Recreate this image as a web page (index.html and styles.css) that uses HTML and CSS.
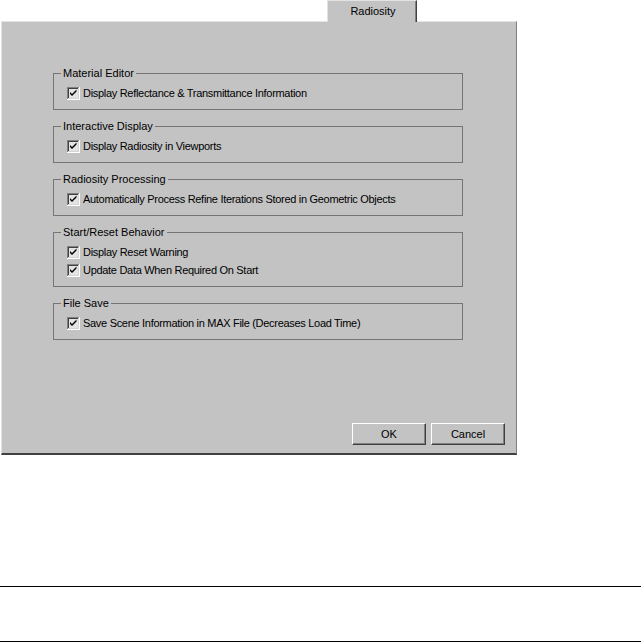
FILE: index.html
```html
<!DOCTYPE html>
<html lang="en">

<head>
    <meta charset="UTF-8">
    <title>Radiosity</title>
    <link rel="stylesheet" href="styles.css">
</head>

<body>

    <section class="dialog">

        <div class="tabs">
            <div class="tab">Radiosity</div>
        </div>

        <div class="panel">

            <div class="groups">

                <fieldset class="group">
                    <legend>Material Editor</legend>
                    <label class="row"><span class="check"><svg width="13" height="13" viewBox="0 0 13 13"><path d="M0 0H12V1H1V12H0Z" fill="#808080"/><path d="M1 1H11V2H2V11H1Z" fill="#404040"/><path d="M12 0H13V13H0V12H12Z" fill="#ffffff"/><path d="M11 1H12V12H1V11H11Z" fill="#d4d4d4"/><rect x="2" y="2" width="9" height="9" fill="#e4e4e4"/><path d="M3 5L5 7L9.5 2.5V4.5L5 9L3 7Z" fill="#000"/></svg></span>Display Reflectance &amp; Transmittance Information</label>
                </fieldset>

                <fieldset class="group">
                    <legend>Interactive Display</legend>
                    <label class="row"><span class="check"><svg width="13" height="13" viewBox="0 0 13 13"><path d="M0 0H12V1H1V12H0Z" fill="#808080"/><path d="M1 1H11V2H2V11H1Z" fill="#404040"/><path d="M12 0H13V13H0V12H12Z" fill="#ffffff"/><path d="M11 1H12V12H1V11H11Z" fill="#d4d4d4"/><rect x="2" y="2" width="9" height="9" fill="#e4e4e4"/><path d="M3 5L5 7L9.5 2.5V4.5L5 9L3 7Z" fill="#000"/></svg></span>Display Radiosity in Viewports</label>
                </fieldset>

                <fieldset class="group">
                    <legend>Radiosity Processing</legend>
                    <label class="row"><span class="check"><svg width="13" height="13" viewBox="0 0 13 13"><path d="M0 0H12V1H1V12H0Z" fill="#808080"/><path d="M1 1H11V2H2V11H1Z" fill="#404040"/><path d="M12 0H13V13H0V12H12Z" fill="#ffffff"/><path d="M11 1H12V12H1V11H11Z" fill="#d4d4d4"/><rect x="2" y="2" width="9" height="9" fill="#e4e4e4"/><path d="M3 5L5 7L9.5 2.5V4.5L5 9L3 7Z" fill="#000"/></svg></span>Automatically Process Refine Iterations Stored in Geometric Objects</label>
                </fieldset>

                <fieldset class="group">
                    <legend>Start/Reset Behavior</legend>
                    <label class="row"><span class="check"><svg width="13" height="13" viewBox="0 0 13 13"><path d="M0 0H12V1H1V12H0Z" fill="#808080"/><path d="M1 1H11V2H2V11H1Z" fill="#404040"/><path d="M12 0H13V13H0V12H12Z" fill="#ffffff"/><path d="M11 1H12V12H1V11H11Z" fill="#d4d4d4"/><rect x="2" y="2" width="9" height="9" fill="#e4e4e4"/><path d="M3 5L5 7L9.5 2.5V4.5L5 9L3 7Z" fill="#000"/></svg></span>Display Reset Warning</label>
                    <label class="row"><span class="check"><svg width="13" height="13" viewBox="0 0 13 13"><path d="M0 0H12V1H1V12H0Z" fill="#808080"/><path d="M1 1H11V2H2V11H1Z" fill="#404040"/><path d="M12 0H13V13H0V12H12Z" fill="#ffffff"/><path d="M11 1H12V12H1V11H11Z" fill="#d4d4d4"/><rect x="2" y="2" width="9" height="9" fill="#e4e4e4"/><path d="M3 5L5 7L9.5 2.5V4.5L5 9L3 7Z" fill="#000"/></svg></span>Update Data When Required On Start</label>
                </fieldset>

                <fieldset class="group">
                    <legend>File Save</legend>
                    <label class="row"><span class="check"><svg width="13" height="13" viewBox="0 0 13 13"><path d="M0 0H12V1H1V12H0Z" fill="#808080"/><path d="M1 1H11V2H2V11H1Z" fill="#404040"/><path d="M12 0H13V13H0V12H12Z" fill="#ffffff"/><path d="M11 1H12V12H1V11H11Z" fill="#d4d4d4"/><rect x="2" y="2" width="9" height="9" fill="#e4e4e4"/><path d="M3 5L5 7L9.5 2.5V4.5L5 9L3 7Z" fill="#000"/></svg></span>Save Scene Information in MAX File (Decreases Load Time)</label>
                </fieldset>

            </div>

            <div class="buttons">
                <button class="btn">OK</button>
                <button class="btn">Cancel</button>
            </div>

        </div>

    </section>

    <div class="strip"></div>

</body>

</html>
```

FILE: styles.css
```css
body {
    margin: 0;
    background: #ffffff;
    font-family: "Liberation Sans", Arial, sans-serif;
    font-size: 11px;
    color: #000000;
}

.dialog {
    width: 518px;
}

.tabs {
    display: flex;
    padding-left: 327px;
    height: 21px;
}

.tab {
    position: relative;
    z-index: 1;
    width: 90px;
    height: 22px;
    margin-bottom: -1px;
    background: #c3c3c3;
    border-top: 1px solid #e3e3e3;
    border-left: 1px solid #e3e3e3;
    border-right: 1px solid #404040;
    box-shadow: inset -1px 0 0 #808080;
    box-sizing: border-box;
    text-align: center;
    line-height: 20px;
    padding-left: 2px;
}

.panel {
    margin-left: 1px;
    width: 516px;
    height: 434px;
    box-sizing: border-box;
    background: #c3c3c3;
    border-top: 1px solid #e3e3e3;
    border-left: 1px solid #e3e3e3;
    border-right: 1px solid #808080;
    border-bottom: 2px solid #404040;
    display: flex;
    flex-direction: column;
    padding: 45px 0 8px 51px;
}

.groups {
    display: flex;
    flex-direction: column;
    gap: 10px;
    width: 410px;
}

.group {
    margin: 0;
    border: 1px solid #757575;
    padding: 4px 13px 7px 13px;
    min-width: 0;
}

.group legend {
    padding: 0 2px;
    margin-left: -6px;
    line-height: 13px;
    height: 13px;
}

.row {
    display: flex;
    align-items: center;
    height: 18px;
    white-space: nowrap;
    letter-spacing: -0.3px;
}

.check {
    display: flex;
    width: 13px;
    height: 13px;
    margin-right: 3px;
}

.buttons {
    margin-top: auto;
    display: flex;
    justify-content: flex-end;
    gap: 5px;
    padding-right: 11px;
}

.btn {
    width: 74px;
    height: 22px;
    padding: 0;
    background: #c3c3c3;
    font-family: "Liberation Sans", Arial, sans-serif;
    font-size: 11px;
    color: #000000;
    border-top: 1px solid #ffffff;
    border-left: 1px solid #ffffff;
    border-right: 1px solid #404040;
    border-bottom: 1px solid #404040;
    box-shadow: inset -1px -1px 0 #808080;
}

.strip {
    margin-top: 131px;
    height: 54px;
    border-top: 1px solid #000000;
    border-bottom: 1px solid #000000;
}
```
